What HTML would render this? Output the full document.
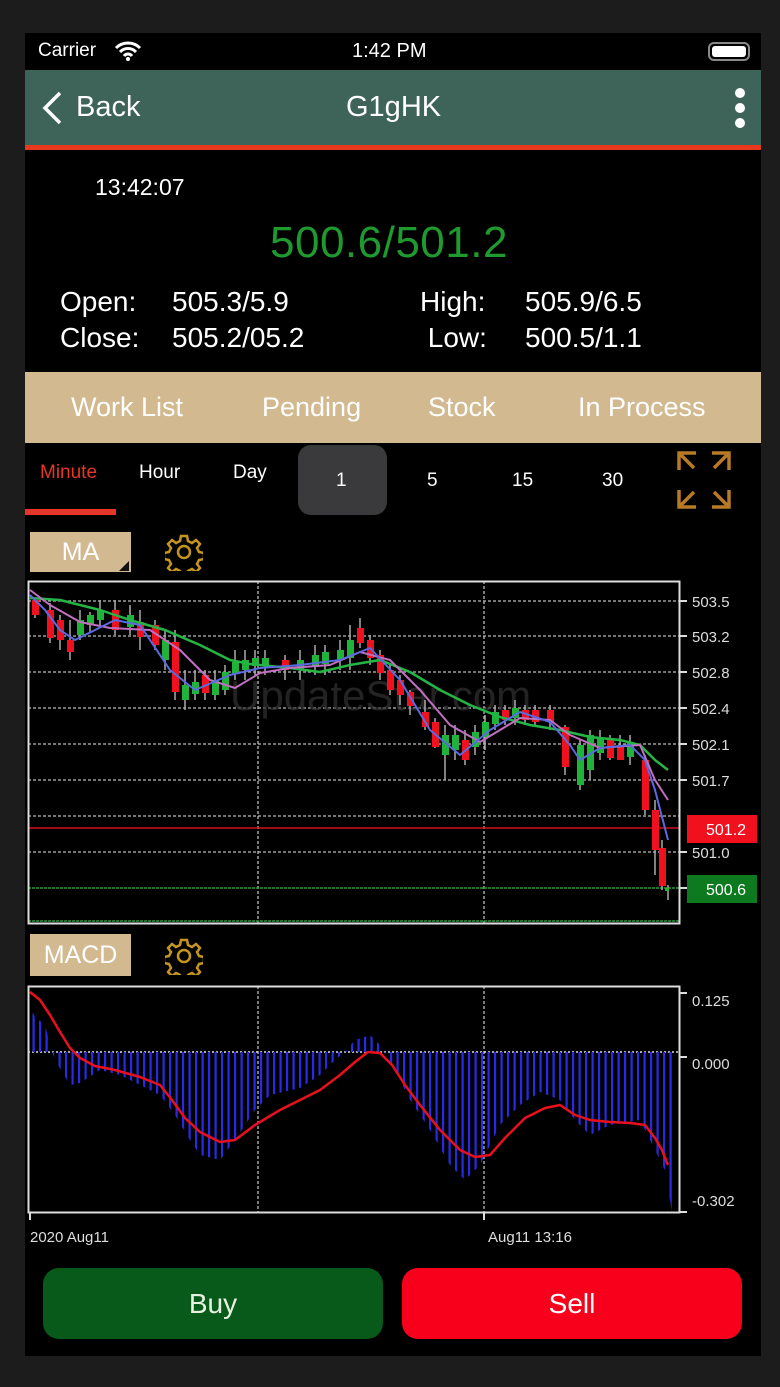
<!DOCTYPE html>
<html><head><meta charset="utf-8"><style>
*{margin:0;padding:0;box-sizing:border-box}
body{width:780px;height:1387px;background:#1c1c1c;font-family:"Liberation Sans",sans-serif;position:relative;overflow:hidden;color:#fff}
.a{position:absolute}
</style></head><body>
<div class="a" style="left:25px;top:33px;width:736px;height:1323px;background:#000"></div>
<div class="a" style="left:38px;top:40px;font-size:19px">Carrier</div>
<svg class="a" style="left:114px;top:40px" width="28" height="22" viewBox="0 0 28 22"><path d="M2 8a17 17 0 0 1 24 0M6 12a11 11 0 0 1 16 0M10 16a5 5 0 0 1 8 0" stroke="#fff" stroke-width="3" fill="none"/><circle cx="14" cy="19" r="2" fill="#fff"/></svg>
<div class="a" style="left:352px;top:40px;font-size:20px">1:42 PM</div>
<div class="a" style="left:708px;top:42px;width:42px;height:19px;border:2px solid #888;border-radius:6px;padding:2px"><div style="width:100%;height:100%;background:#fff;border-radius:3px"></div></div>
<div class="a" style="left:25px;top:70px;width:736px;height:75px;background:#3e6358"></div>
<div class="a" style="left:25px;top:145px;width:736px;height:5px;background:#e8391f"></div>
<svg class="a" style="left:40px;top:90px" width="24" height="36"><path d="M20 3L5 18l15 15" stroke="#fff" stroke-width="3.5" fill="none"/></svg>
<div class="a" style="left:76px;top:91px;font-size:29px">Back</div>
<div class="a" style="left:346px;top:91px;font-size:29px">G1gHK</div>
<div class="a" style="left:735px;top:88px;width:10px;height:10px;border-radius:5px;background:#fff"></div>
<div class="a" style="left:735px;top:103px;width:10px;height:10px;border-radius:5px;background:#fff"></div>
<div class="a" style="left:735px;top:118px;width:10px;height:10px;border-radius:5px;background:#fff"></div>
<div class="a" style="left:95px;top:174px;font-size:23px">13:42:07</div>
<div class="a" style="left:270px;top:218px;font-size:44px;color:#1e9a2e;letter-spacing:0.5px">500.6/501.2</div>
<div class="a" style="left:60px;top:284px;font-size:28px;line-height:36px">Open:<br>Close:</div>
<div class="a" style="left:172px;top:284px;font-size:28px;line-height:36px">505.3/5.9<br>505.2/05.2</div>
<div class="a" style="left:420px;top:284px;font-size:28px;line-height:36px">High:<br>&nbsp;Low:</div>
<div class="a" style="left:525px;top:284px;font-size:28px;line-height:36px">505.9/6.5<br>500.5/1.1</div>
<div class="a" style="left:25px;top:372px;width:736px;height:71px;background:#d2b98f"></div>
<div class="a" style="left:71px;top:392px;font-size:27px">Work List</div>
<div class="a" style="left:262px;top:392px;font-size:27px">Pending</div>
<div class="a" style="left:428px;top:392px;font-size:27px">Stock</div>
<div class="a" style="left:578px;top:392px;font-size:27px">In Process</div>
<div class="a" style="left:298px;top:445px;width:89px;height:70px;background:#3a3a3c;border-radius:13px"></div>
<div class="a" style="left:40px;top:462px;font-size:19px;color:#e8352a">Minute</div>
<div class="a" style="left:139px;top:462px;font-size:19px">Hour</div>
<div class="a" style="left:233px;top:462px;font-size:19px">Day</div>
<div class="a" style="left:336px;top:470px;font-size:19px">1</div>
<div class="a" style="left:427px;top:470px;font-size:19px">5</div>
<div class="a" style="left:512px;top:470px;font-size:19px">15</div>
<div class="a" style="left:602px;top:470px;font-size:19px">30</div>
<div class="a" style="left:25px;top:509px;width:91px;height:6px;background:#e8352a"></div>
<svg class="a" style="left:676px;top:450px" width="56" height="60" viewBox="0 0 56 60" stroke="#b87a25" stroke-width="3.5" fill="none"><path d="M3 20V3h17M3 3l15 15M36 3h17v17M53 3L38 18M3 40v17h17M3 57l15-15M53 40v17H36M53 57L38 42"/></svg>
<div class="a" style="left:30px;top:532px;width:101px;height:40px;background:#d2b98f;font-size:25px;text-align:center;line-height:40px">MA</div>
<div class="a" style="left:119px;top:561px;width:0;height:0;border-left:10px solid transparent;border-bottom:10px solid #111"></div>
<svg class="a" style="left:165px;top:533px" width="38" height="38" viewBox="0 0 38 38"><g fill="none" stroke="#c4961f" stroke-width="2.5"><circle cx="19" cy="19" r="6"/><path d="M16 3h6l1 5 4 2 4-3 4 4-3 4 2 4 5 1v6l-5 1-2 4 3 4-4 4-4-3-4 2-1 5h-6l-1-5-4-2-4 3-4-4 3-4-2-4-5-1v-6l5-1 2-4-3-4 4-4 4 3 4-2z"/></g></svg>
<div class="a" style="left:30px;top:934px;width:101px;height:42px;background:#d2b98f;font-size:25px;text-align:center;line-height:42px">MACD</div>
<svg class="a" style="left:165px;top:937px" width="38" height="38" viewBox="0 0 38 38"><g fill="none" stroke="#c4961f" stroke-width="2.5"><circle cx="19" cy="19" r="6"/><path d="M16 3h6l1 5 4 2 4-3 4 4-3 4 2 4 5 1v6l-5 1-2 4 3 4-4 4-4-3-4 2-1 5h-6l-1-5-4-2-4 3-4-4 3-4-2-4-5-1v-6l5-1 2-4-3-4 4-4 4 3 4-2z"/></g></svg>
<svg class="a" style="left:0;top:0" width="780" height="1387" font-family="Liberation Sans,sans-serif">
<defs><pattern id="hb" width="6.5" height="10" patternUnits="userSpaceOnUse"><rect x="0" y="0" width="2.2" height="10" fill="#2a2ae6"/></pattern></defs>
<g stroke="#bbb" stroke-width="1.3" stroke-dasharray="3 2" fill="none">
<path d="M28 601H680M28 636H680M28 672H680M28 708H680M28 744H680M28 780H680M28 816H680M28 852H680"/>
<path d="M258 581V924M484 581V924M258 986V1212M484 986V1212"/>
</g>
<path d="M28 1052H680" stroke="#ddd" stroke-width="1.5" stroke-dasharray="2 2"/>
<path d="M28 888H680M28 921H680" stroke="#2c9a3a" stroke-width="1.5" stroke-dasharray="3 1"/>
<path d="M28 828H680" stroke="#d0111a" stroke-width="1.5"/>
<rect x="28.5" y="581.5" width="651" height="342" fill="none" stroke="#ddd" stroke-width="2"/>
<rect x="28.5" y="986.5" width="651" height="226" fill="none" stroke="#ddd" stroke-width="2"/>
<g stroke="#ddd" stroke-width="2"><path d="M680 601h7M680 636h7M680 672h7M680 708h7M680 744h7M680 780h7M680 852h7M680 888h7M680 993h7M680 1057h7M680 1212h7M30 1212v8M484 1212v8"/></g>
<g fill="#ddd" font-size="15"><text x="692" y="607">503.5</text><text x="692" y="642">503.2</text><text x="692" y="678">502.8</text><text x="692" y="714">502.4</text><text x="692" y="750">502.1</text><text x="692" y="786">501.7</text><text x="692" y="858">501.0</text>
<text x="692" y="1006">0.125</text><text x="692" y="1069">0.000</text><text x="692" y="1206">-0.302</text>
<text x="30" y="1242">2020 Aug11</text><text x="488" y="1242">Aug11 13:16</text></g>
<rect x="687" y="815" width="70" height="28" fill="#f0101e"/><text x="706" y="835" fill="#fff" font-size="16">501.2</text>
<rect x="687" y="875" width="70" height="28" fill="#0d7a20"/><text x="706" y="895" fill="#fff" font-size="16">500.6</text>
<text x="230" y="710" fill="#333" font-size="42" opacity="0.7">UpdateStar.com</text>
<g stroke-width="1.5">
<path d="M35 598v20M50 603v40M60 615v35M70 620v40M80 610v30M90 612v20M100 600v25M115 600v35M130 605v30M140 610v40M155 620v30M165 630v40M175 630v70M185 670v40M195 670v30M205 670v30M215 670v30M225 665v30M235 650v30M245 650v30M255 650v25M265 650v25M285 655v25M300 650v30M315 645v30M325 645v30M340 640v30M350 625v45M360 618v30M370 635v30M380 650v30M390 665v30M400 675v30M410 690v25M425 700v30M435 718v30M445 725v55M455 725v35M465 730v35M475 725v30M485 715v35M495 705v25M505 705v20M515 700v25M525 705v20M535 705v20M550 705v25M565 725v50M580 740v50M590 730v50M600 730v30M610 735v25M620 735v25M630 735v30M645 755v60M655 800v75M662 840v50M668 885v15" stroke="#aaa"/>
</g>
<g fill="#f0101e">
<rect x="32" y="600" width="7" height="15"/><rect x="47" y="610" width="7" height="28"/><rect x="57" y="620" width="7" height="20"/><rect x="67" y="640" width="7" height="12"/><rect x="112" y="610" width="7" height="20"/><rect x="137" y="622" width="7" height="15"/><rect x="152" y="625" width="7" height="20"/><rect x="172" y="642" width="7" height="50"/><rect x="202" y="675" width="7" height="18"/><rect x="282" y="660" width="7" height="10"/><rect x="357" y="628" width="7" height="15"/><rect x="367" y="640" width="7" height="18"/><rect x="377" y="655" width="7" height="18"/><rect x="387" y="670" width="7" height="20"/><rect x="397" y="680" width="7" height="15"/><rect x="407" y="692" width="7" height="14"/><rect x="422" y="712" width="7" height="15"/><rect x="432" y="722" width="7" height="25"/><rect x="462" y="740" width="7" height="20"/><rect x="502" y="710" width="7" height="10"/><rect x="522" y="710" width="7" height="10"/><rect x="532" y="710" width="7" height="12"/><rect x="547" y="710" width="7" height="12"/><rect x="562" y="727" width="7" height="40"/><rect x="607" y="738" width="7" height="20"/><rect x="617" y="745" width="7" height="15"/><rect x="642" y="760" width="7" height="50"/><rect x="652" y="810" width="7" height="40"/><rect x="659" y="848" width="7" height="38"/>
</g>
<g fill="#1fb33a">
<rect x="77" y="620" width="7" height="15"/><rect x="87" y="615" width="7" height="10"/><rect x="97" y="610" width="7" height="10"/><rect x="127" y="615" width="7" height="12"/><rect x="162" y="640" width="7" height="20"/><rect x="182" y="685" width="7" height="15"/><rect x="192" y="682" width="7" height="12"/><rect x="212" y="680" width="7" height="15"/><rect x="222" y="672" width="7" height="18"/><rect x="232" y="662" width="7" height="12"/><rect x="242" y="660" width="7" height="10"/><rect x="252" y="658" width="7" height="8"/><rect x="262" y="658" width="7" height="8"/><rect x="297" y="660" width="7" height="10"/><rect x="312" y="655" width="7" height="12"/><rect x="322" y="652" width="7" height="12"/><rect x="337" y="650" width="7" height="10"/><rect x="347" y="640" width="7" height="18"/><rect x="442" y="735" width="7" height="20"/><rect x="452" y="735" width="7" height="15"/><rect x="472" y="732" width="7" height="15"/><rect x="482" y="722" width="7" height="15"/><rect x="492" y="712" width="7" height="12"/><rect x="512" y="708" width="7" height="10"/><rect x="577" y="745" width="7" height="40"/><rect x="587" y="735" width="7" height="35"/><rect x="597" y="738" width="7" height="15"/><rect x="627" y="742" width="7" height="15"/><rect x="665" y="888" width="4" height="3"/>
</g>
<g fill="none" stroke-linejoin="round">
<polyline points="30,598 60,600 100,610 130,620 165,630 200,645 230,660 250,664 290,668 320,672 350,665 380,660 410,672 440,690 470,705 500,717 530,725 560,730 590,737 620,740 640,745 655,760 668,770" stroke="#25b545" stroke-width="2.5"/>
<polyline points="30,590 50,605 80,622 110,628 150,630 180,650 210,680 235,688 260,673 290,668 330,665 360,652 390,660 420,690 450,725 480,742 500,730 520,718 550,720 570,735 600,748 640,745 655,780 668,800" stroke="#c070c0" stroke-width="2"/>
<polyline points="30,595 45,610 60,630 75,640 95,630 115,620 140,625 170,670 195,690 230,675 260,668 300,665 340,660 370,648 400,680 430,730 460,755 490,730 520,712 550,722 570,745 580,760 600,748 630,745 645,760 655,790 668,840" stroke="#5a6ae0" stroke-width="2"/>
</g>
<polygon fill="url(#hb)" points="30,1008 35,1017 45,1025 50,1045 55,1060 70,1085 80,1083 100,1070 120,1075 140,1085 160,1095 175,1115 190,1140 200,1155 220,1160 235,1140 255,1110 270,1095 300,1088 320,1075 335,1060 345,1052 355,1040 370,1035 380,1045 395,1070 410,1100 430,1130 450,1165 465,1180 480,1165 500,1125 520,1105 540,1092 560,1100 575,1120 590,1135 610,1125 640,1120 655,1150 665,1170 672,1212 672,1052 30,1052"/>
<polyline fill="none" stroke-linejoin="round" points="30,992 40,1000 50,1015 60,1032 70,1048 80,1058 95,1066 115,1070 140,1077 160,1085 172,1100 185,1118 200,1132 220,1142 235,1140 255,1125 280,1110 300,1100 320,1090 340,1075 355,1062 368,1052 380,1053 392,1065 405,1085 420,1105 440,1130 460,1150 475,1157 490,1155 505,1138 525,1118 545,1108 560,1105 575,1115 590,1120 610,1122 630,1123 645,1125 655,1138 662,1150 668,1165" stroke="#e8101e" stroke-width="2.5"/>
</svg>
<div class="a" style="left:43px;top:1268px;width:340px;height:71px;background:#075a1a;border-radius:16px;font-size:28px;text-align:center;line-height:71px;color:#e8f0e0">Buy</div>
<div class="a" style="left:402px;top:1268px;width:340px;height:71px;background:#f8001c;border-radius:16px;font-size:28px;text-align:center;line-height:71px">Sell</div>
</body></html>
